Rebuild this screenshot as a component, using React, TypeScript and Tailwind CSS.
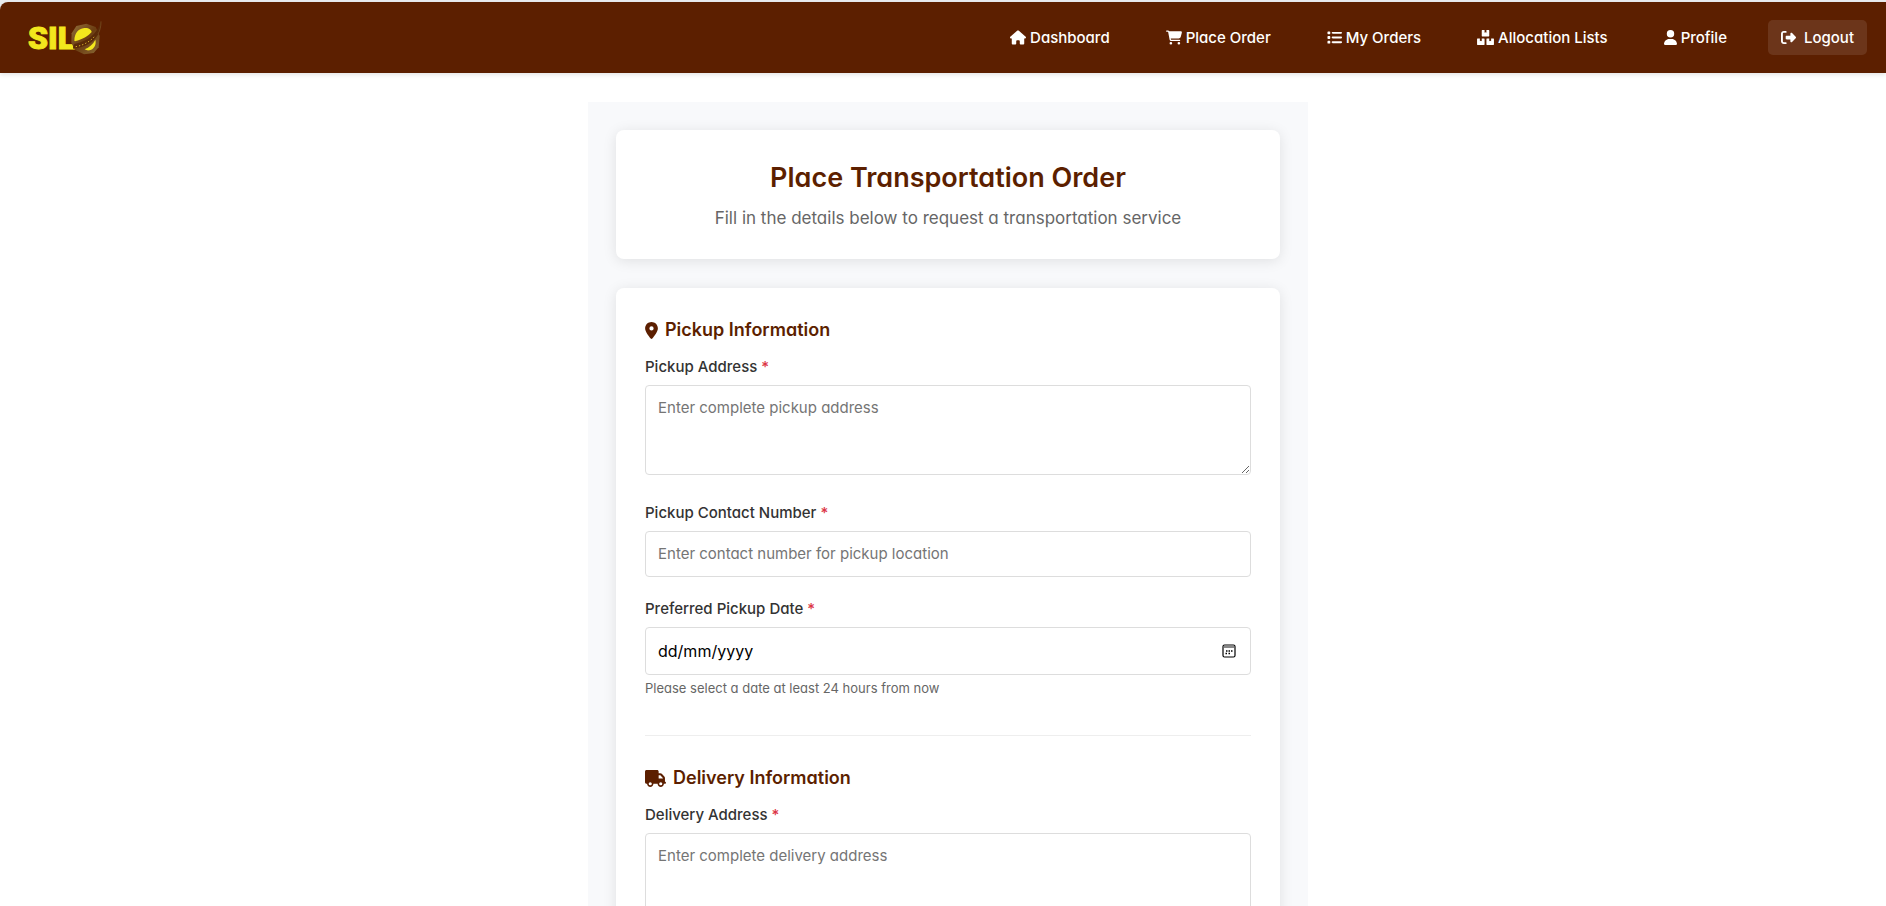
import React, { useState } from "react";
import { FaBoxes } from "react-icons/fa";
import {
  FaHouse,
  FaCartShopping,
  FaList,
  FaUser,
  FaRightFromBracket,
  FaLocationDot,
  FaTruck,
} from "react-icons/fa6";

const navItems = [
  { label: "Dashboard", Icon: FaHouse, size: "h-[15px] w-4" },
  { label: "Place Order", Icon: FaCartShopping, size: "h-[15px] w-4" },
  { label: "My Orders", Icon: FaList, size: "h-[15px] w-[15px]" },
  { label: "Allocation Lists", Icon: FaBoxes, size: "h-[15px] w-[17px]" },
  { label: "Profile", Icon: FaUser, size: "h-[15px] w-[13px]" },
];

const fieldClass =
  "block w-full rounded border border-[#dddddd] bg-white px-3 text-[15px] leading-[22px] text-black placeholder:text-[#757575] focus:border-[#5c1f00] focus:outline-none";

function Logo() {
  return (
    <a href="#home" aria-label="SILO" className="flex items-center text-[#f2e71d]">
      <span className="font-['Roboto',sans-serif] text-[32px] leading-8 font-black [-webkit-text-stroke:1px_#f2e71d]">
        SIL
      </span>
      <svg viewBox="216 48 96 108" className="-ml-1 h-9 w-8" aria-hidden="true">
        <defs>
          <linearGradient id="shell" x1="0" y1="0" x2="1" y2="1">
            <stop offset="0" stopColor="#94713c" />
            <stop offset="0.5" stopColor="#6b3d12" />
            <stop offset="1" stopColor="#8a6a35" />
          </linearGradient>
        </defs>
        <path d="M218 88 232 66 262 59 290 69 302 96 299 130 284 147 255 151 228 138 217 116Z" fill="url(#shell)" />
        <path d="M226 110C226 88 238 74 256 72c14-1 21 6 22 12-11 13-27 21-50 28Z" fill="#f2e71d" />
        <path d="M257 136c14-6 25-15 32-29 4 14-4 29-17 32-6 1-11 0-15-3Z" fill="#f2e71d" />
        <path d="M306 52c2 42-27 76-84 82 0-6 2-10 4-14 42-8 68-30 80-68Z" fill="#5a2a08" />
        <path d="M230 128c22-4 42-14 58-32" fill="none" stroke="#d8b32a" strokeWidth="3" strokeDasharray="4 6" />
        <path d="M306 52c0 16-3 28-9 38" fill="none" stroke="#7d5426" strokeWidth="2" />
      </svg>
    </a>
  );
}

function SectionTitle({ icon, children }: { icon: React.ReactNode; children: React.ReactNode }) {
  return (
    <h2 className="mb-[13px] flex items-center gap-[7px] text-[18px] leading-[26px] font-semibold text-[#5c1f00]">
      {icon}
      {children}
    </h2>
  );
}

function Label({ htmlFor, children }: { htmlFor: string; children: React.ReactNode }) {
  return (
    <label htmlFor={htmlFor} className="mb-[7px] block text-[15px] leading-[22px] font-medium text-[#333333]">
      {children} <span className="text-[#dc3545]">*</span>
    </label>
  );
}

function DateField({ id }: { id: string }) {
  const [value, setValue] = useState("");
  return (
    <div className="flex h-12 items-center rounded border border-[#dddddd] bg-white px-3 focus-within:border-[#5c1f00]">
      <input
        id={id}
        type="text"
        inputMode="numeric"
        placeholder="dd/mm/yyyy"
        value={value}
        onChange={(e) => setValue(e.target.value)}
        className="min-w-0 flex-1 text-base leading-[22px] text-black placeholder:text-black focus:outline-none"
      />
      <button type="button" aria-label="Open calendar" className="mr-0.5">
        <svg viewBox="0 0 14 14" className="size-3.5" aria-hidden="true">
          <path d="M2 3h10" stroke="#888888" strokeWidth="2" />
          <rect x="1" y="1" width="12" height="12" rx="1.5" fill="none" stroke="#000000" strokeWidth="1.2" />
          <path d="M4 7h1.500M6.500 7H8M9 7h1.500M3.500 9.500H5M6.500 9.500H8" stroke="#000000" strokeWidth="1.400" />
        </svg>
      </button>
    </div>
  );
}

export default function App() {
  return (
    <div className="min-h-screen bg-[#e9ebee] pt-0.5 font-['Inter',sans-serif] [font-feature-settings:'cv11']">
      <div className="min-h-screen rounded-tl-lg bg-white">
        <header className="flex h-[71px] items-center justify-between rounded-tl-lg bg-[#5c1f00] pr-[19px] pl-7 shadow-[0_2px_4px_rgba(0,0,0,0.1)]">
          <Logo />
          <nav className="flex items-center text-[15px] leading-[22px] font-medium text-white">
            {navItems.map(({ label, Icon, size }) => (
              <a key={label} href="#" className="mr-[26px] flex items-center gap-1 px-[15px]">
                <Icon className={"shrink-0 " + size} />
                {label}
              </a>
            ))}
            <button type="button" className="flex h-[35px] items-center gap-2 rounded-[5px] bg-white/10 px-[13px]">
              <FaRightFromBracket className="shrink-0" />
              Logout
            </button>
          </nav>
        </header>

        <main className="pt-[29px] pl-2.5">
          <div className="mx-auto flex max-w-[720px] flex-col gap-[29px] bg-[#f8f9fb] p-7">
            <section className="rounded-lg bg-white py-7 text-center shadow-[0_2px_14px_rgba(0,0,0,0.1)]">
              <h1 className="text-[27px] leading-10 font-semibold text-[#5c1f00]">Place Transportation Order</h1>
              <p className="mt-2 text-[17px] leading-[25px] text-[#666666]">
                Fill in the details below to request a transportation service
              </p>
            </section>

            <form className="rounded-lg bg-white p-[29px] shadow-[0_2px_14px_rgba(0,0,0,0.1)]">
              <section className="border-b border-[#eeeeee] pb-[38px]">
                <SectionTitle icon={<FaLocationDot className="h-[17px] w-[13px] shrink-0" />}>
                  Pickup Information
                </SectionTitle>
                <div className="mb-[27px]">
                  <Label htmlFor="pickup-address">Pickup Address</Label>
                  <textarea
                    id="pickup-address"
                    placeholder="Enter complete pickup address"
                    className={fieldClass + " h-[90px] resize-y py-[11px]"}
                  />
                </div>
                <div className="mb-[21px]">
                  <Label htmlFor="pickup-contact">Pickup Contact Number</Label>
                  <input
                    id="pickup-contact"
                    type="tel"
                    placeholder="Enter contact number for pickup location"
                    className={fieldClass + " py-[11px]"}
                  />
                </div>
                <Label htmlFor="pickup-date">Preferred Pickup Date</Label>
                <DateField id="pickup-date" />
                <p className="mt-1 text-[13px] leading-[18px] text-[#666666]">
                  Please select a date at least 24 hours from now
                </p>
              </section>

              <section className="pt-[29px]">
                <SectionTitle icon={<FaTruck className="h-[17px] w-[21px] shrink-0" />}>
                  Delivery Information
                </SectionTitle>
                <Label htmlFor="delivery-address">Delivery Address</Label>
                <textarea
                  id="delivery-address"
                  placeholder="Enter complete delivery address"
                  className={fieldClass + " h-[90px] resize-y py-[11px]"}
                />
              </section>
            </form>
          </div>
        </main>
      </div>
    </div>
  );
}
